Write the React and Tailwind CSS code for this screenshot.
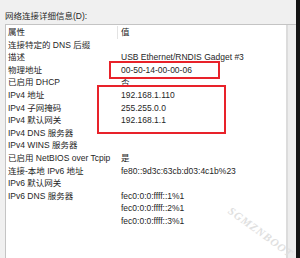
import React from 'react';

const rows = [
  ['连接特定的 DNS 后缀', ''],
  ['描述', 'USB Ethernet/RNDIS Gadget #3'],
  ['物理地址', '00-50-14-00-00-06'],
  ['已启用 DHCP', '否'],
  ['IPv4 地址', '192.168.1.110'],
  ['IPv4 子网掩码', '255.255.0.0'],
  ['IPv4 默认网关', '192.168.1.1'],
  ['IPv4 DNS 服务器', ''],
  ['IPv4 WINS 服务器', ''],
  ['已启用 NetBIOS over Tcpip', '是'],
  ['连接-本地 IPv6 地址', 'fe80::9d3c:63cb:d03:4c1b%23'],
  ['IPv6 默认网关', ''],
  ['IPv6 DNS 服务器', 'fec0:0:0:ffff::1%1'],
  ['', 'fec0:0:0:ffff::2%1'],
  ['', 'fec0:0:0:ffff::3%1'],
];

export default function App() {
  return (
    <div
      className="relative w-[300px] h-[258px] overflow-hidden bg-[#f0f0f0] flex text-[#262626]"
      style={{ fontFamily: '"Liberation Sans", "Noto Sans CJK SC", sans-serif' }}
    >
      <div className="flex-1 flex flex-col">
        <div className="h-[24px] pl-[5px] pt-[10px] text-[8.5px] leading-[12px]">网络连接详细信息(D):</div>
        <div className="flex-1 ml-[5px] flex border-l border-t border-[#c4c4c4] bg-white">
          <div className="flex-1 pl-[2px] pt-[1px] text-[8.5px] leading-[12.6px]">
            <div className="grid grid-cols-[111px_1fr] h-[12.6px]">
              <div className="relative">
                属性
                <span className="absolute right-[1px] top-0 h-[13px] w-px bg-[#e3e3e3]" />
              </div>
              <div className="pl-[2px]">值</div>
            </div>
            {rows.map(([k, v], i) => (
              <div key={i} className="grid grid-cols-[111px_1fr] h-[12.6px] whitespace-nowrap">
                <div>{k}</div>
                <div className="pl-[2px]">{v}</div>
              </div>
            ))}
          </div>
          <div className="w-[10px] flex">
            <div className="w-[2px] bg-[#dcdcdc]" />
            <div className="flex-1 bg-[#ededed]" />
          </div>
        </div>
      </div>
      <div className="w-[4px] bg-[#141414]" />

      <div className="absolute left-[109px] top-[61px] w-[111px] h-[18px] border-2 border-[#e8222a]" />
      <div className="absolute left-[97px] top-[85px] w-[129px] h-[49px] border-2 border-[#e8222a]" />

      <div
        className="absolute left-[222px] top-[224px] rotate-[36deg] text-[11px] font-bold italic tracking-[1px] text-[#e0e0e0]"
        style={{ fontFamily: '"Liberation Serif", serif' }}
      >
        SGMZNBOOT
      </div>
    </div>
  );
}
